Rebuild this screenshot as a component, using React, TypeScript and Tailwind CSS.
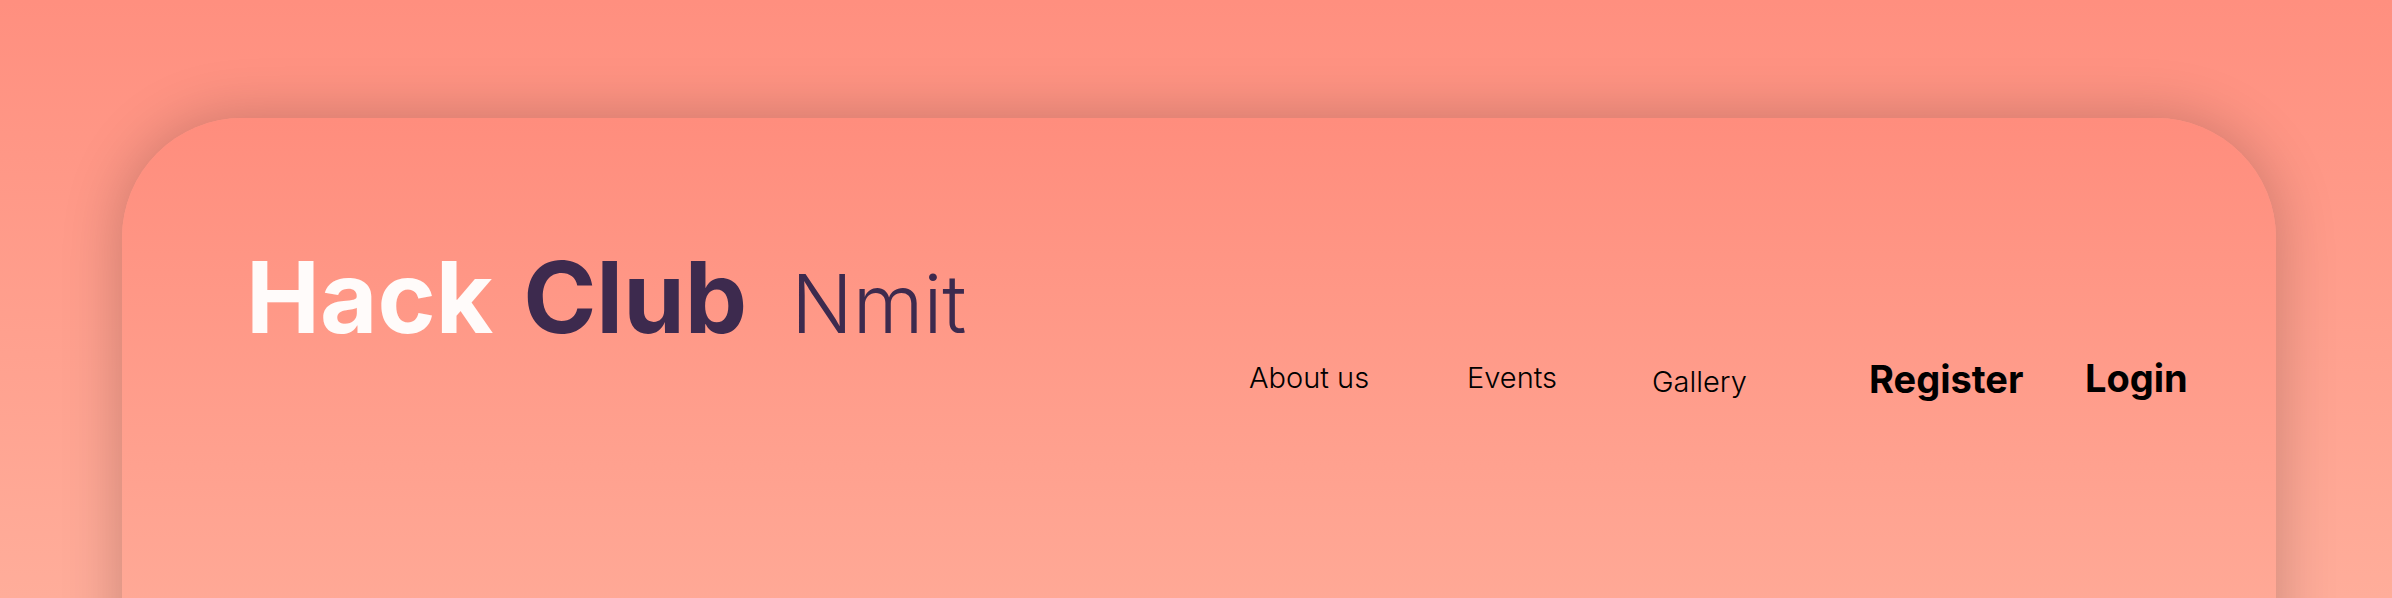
import React from "react";

export default function App() {
  return (
    <div
      className="h-screen w-full overflow-hidden bg-gradient-to-b from-[#ff8f7f] to-[#ffad9a] pt-[118px] pl-[122px] pr-[116px]"
      style={{ fontFamily: "Inter, 'Noto Sans', sans-serif" }}
    >
      <div className="h-[600px] rounded-t-[120px] bg-gradient-to-b from-[#ff8d7d] to-[#ffaf9c] shadow-[0_0_60px_rgba(0,0,0,0.22)] pl-[124px] pt-[130px]">
        <header className="flex items-start">
          <div className="w-[1003px] shrink-0 flex items-baseline leading-none">
            <span className="text-[99px] font-bold text-[#fffbfa]">Hack</span>
            <span className="ml-[30px] text-[99px] font-bold text-[#3d2a4e]">Club</span>
            <span className="ml-[44px] text-[81px] font-light text-[#3d2a4e]">Nmit</span>
          </div>
          <nav className="mt-[111px] flex items-start leading-none text-black">
            <a className="w-[218px] shrink-0 mt-[4px] text-[29px] font-light">About us</a>
            <a className="w-[185px] shrink-0 mt-[4px] text-[29px] font-light">Events</a>
            <a className="w-[217px] shrink-0 mt-[8px] text-[29px] font-light">Gallery</a>
            <a className="w-[216px] shrink-0 mt-[1px] text-[38px] font-bold">Register</a>
            <a className="shrink-0 text-[38px] font-bold">Login</a>
          </nav>
        </header>
      </div>
    </div>
  );
}
